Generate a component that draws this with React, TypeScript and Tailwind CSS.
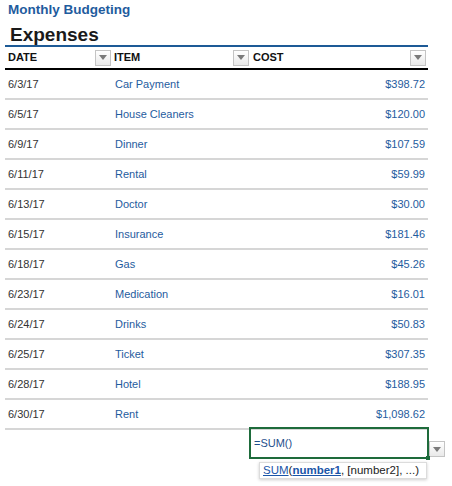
import React from "react";

const expenses = [
  { date: "6/3/17", item: "Car Payment", cost: "$398.72" },
  { date: "6/5/17", item: "House Cleaners", cost: "$120.00" },
  { date: "6/9/17", item: "Dinner", cost: "$107.59" },
  { date: "6/11/17", item: "Rental", cost: "$59.99" },
  { date: "6/13/17", item: "Doctor", cost: "$30.00" },
  { date: "6/15/17", item: "Insurance", cost: "$181.46" },
  { date: "6/18/17", item: "Gas", cost: "$45.26" },
  { date: "6/23/17", item: "Medication", cost: "$16.01" },
  { date: "6/24/17", item: "Drinks", cost: "$50.83" },
  { date: "6/25/17", item: "Ticket", cost: "$307.35" },
  { date: "6/28/17", item: "Hotel", cost: "$188.95" },
  { date: "6/30/17", item: "Rent", cost: "$1,098.62" },
];

function FilterButton({ className = "" }: { className?: string }) {
  return (
    <div
      className={`w-[16px] h-[16px] border border-[#c4c4c4] bg-gradient-to-b from-white to-[#e9e9e9] flex items-center justify-center shrink-0 ${className}`}
    >
      <svg width="8" height="5" viewBox="0 0 8 5">
        <path d="M0 0 L8 0 L4 5 Z" fill="#7a7a7a" />
      </svg>
    </div>
  );
}

export default function App() {
  return (
    <div className="w-[452px] h-[486px] bg-white overflow-hidden font-['Liberation_Sans',Arial,sans-serif]">
      {/* Titulo */}
      <div className="pl-[8px] pt-[2px] text-[13.5px] leading-[16px] font-bold text-[#1f5c9e]">
        Monthly Budgeting
      </div>
      <div className="pl-[10px] mt-[6px] text-[19px] leading-[21px] font-bold text-[#1a1a1a]">
        Expenses
      </div>

      {/* Tabla */}
      <div className="ml-[5px] w-[423px]">
        <div className="grid grid-cols-[107px_139px_177px] h-[25px] border-t-2 border-b-2 border-t-[#1d5a96] border-b-black text-[11px] font-bold text-[#111]">
          <div className="flex items-center justify-between pl-[3px] pr-[1px]">
            <span>DATE</span>
            <FilterButton />
          </div>
          <div className="flex items-center justify-between pl-[2px] pr-[2px]">
            <span>ITEM</span>
            <FilterButton />
          </div>
          <div className="flex items-center justify-between pl-[2px] pr-[2px]">
            <span>COST</span>
            <FilterButton />
          </div>
        </div>

        {expenses.map((e) => (
          <div
            key={e.date}
            className="grid grid-cols-[107px_139px_177px] h-[30px] border-b-2 border-[#d6d6d6] text-[11px] items-center"
          >
            <div className="pl-[3px] text-[#333]">{e.date}</div>
            <div className="pl-[3px] text-[#1f5c9e]">{e.item}</div>
            <div className="pr-[3px] text-right text-[#1f5c9e]">{e.cost}</div>
          </div>
        ))}
      </div>

      {/* Celda de formula */}
      <div className="flex -mt-[3px]">
        <div className="w-[249px] shrink-0" />
        <div className="relative w-[180px] h-[32px] border-2 border-[#1e6b3b] flex items-center pl-[3px] text-[11px] text-[#1f4f8c]">
          =SUM()
          <div className="absolute -right-[3px] -bottom-[3px] w-[4px] h-[4px] bg-[#1e6b3b]" />
        </div>
        <FilterButton className="mt-[14px]" />
      </div>

      {/* Ayuda */}
      <div className="ml-[259px] mt-[3px] w-[168px] h-[17px] border border-[#dcdcdc] bg-white shadow-[0_1px_3px_rgba(0,0,0,0.2)] flex items-center pl-[3px] text-[11.5px] text-[#222] whitespace-nowrap">
        <span className="text-[#1a55a8] underline">SUM</span>(
        <span className="text-[#1a55a8] underline font-bold">number1</span>, [number2], ...)
      </div>
    </div>
  );
}
